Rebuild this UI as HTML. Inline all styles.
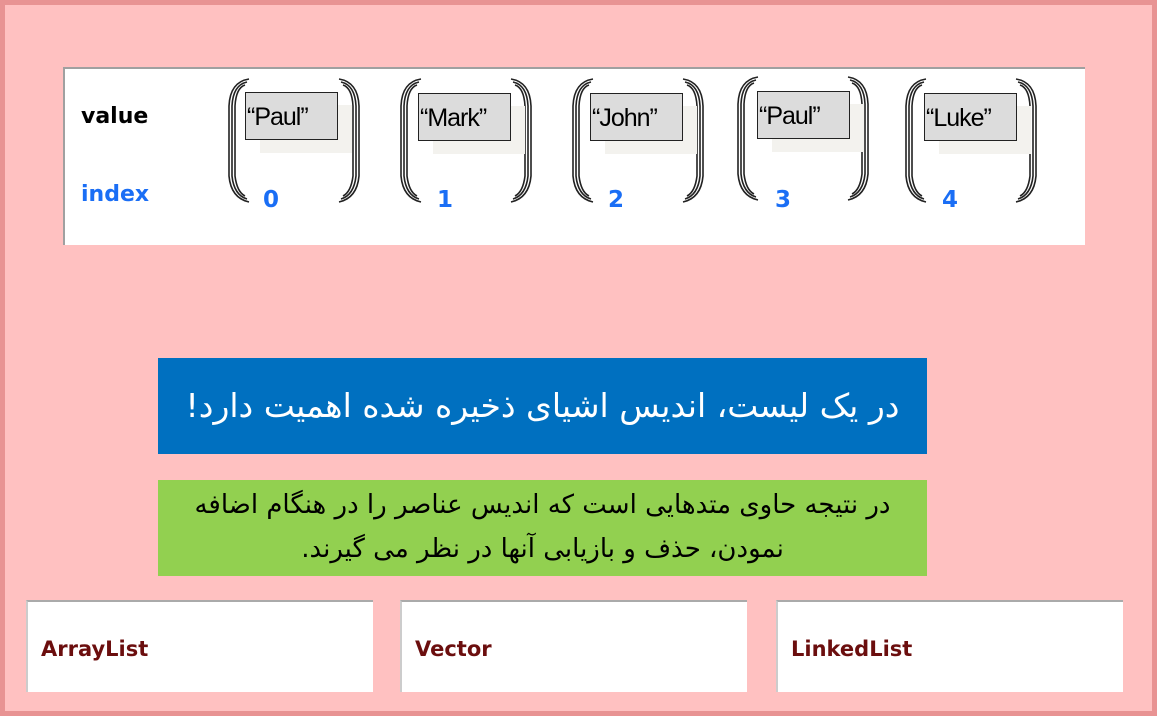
<!DOCTYPE html><html><head><meta charset="utf-8"><style>
body{margin:0;width:1157px;height:716px;overflow:hidden;font-family:"Liberation Sans",sans-serif}
.frame{position:absolute;left:0;top:0;width:1147px;height:706px;border:5px solid #e89393;background:#ffc1c1}
.a{position:absolute}
.top{left:63px;top:67px;width:1020px;height:176px;background:#fff;border-top:2px solid #a0a0a0;border-left:2px solid #a0a0a0}
.lbl{font-family:"DejaVu Sans",sans-serif;font-weight:bold;font-size:22px}
.box{background:#dcdcdc;border:1.5px solid #222;width:93px;height:48px;font-size:25px;line-height:48px;padding-left:1px;box-sizing:border-box;letter-spacing:-1px}
.sh{background:#f3f2ee;width:92px;height:48px}
.idx{color:#1a6ef5;font-family:"DejaVu Sans",sans-serif;font-weight:bold;font-size:23px}
.blue{left:158px;top:358px;width:769px;height:96px;background:#0070c0;color:#fff;font-family:"DejaVu Sans",sans-serif;font-size:33px;text-align:center;line-height:96px}
.green{left:158px;top:480px;width:769px;height:96px;background:#92d050;color:#000;font-family:"DejaVu Sans",sans-serif;font-size:26px;text-align:center;line-height:44px;padding-top:3px;box-sizing:border-box;white-space:nowrap}
.bt{top:600px;width:347px;height:92px;background:#fff;border-top:2px solid #aaa;border-left:2px solid #ccc;color:#6b0e0e;font-family:"DejaVu Sans",sans-serif;font-weight:bold;font-size:21px;line-height:94px;padding-left:13px;box-sizing:border-box}
</style></head><body>
<div class="frame"></div>
<div class="a top"></div>
<div class="a lbl" style="left:81px;top:104px">value</div>
<div class="a lbl idx" style="left:81px;top:182px;font-size:22px">index</div>
<svg class="a" style="left:0;top:0" width="1157" height="716">
<defs><g id="br" fill="none" stroke="#222" stroke-width="1.6">
<path d="M22 3 Q3 6 2 30 L2 100 Q4 122 22 126"/><path d="M20 6 Q6 9 5 30 L5 100 Q7 119 20 123"/><path d="M18 9 Q9 12 8 30 L8 100 Q10 116 18 120"/>
<path d="M112 3 Q131 6 132 30 L132 100 Q130 122 112 126"/><path d="M114 6 Q128 9 129 30 L129 100 Q127 119 114 123"/><path d="M116 9 Q125 12 126 30 L126 100 Q124 116 116 120"/>
</g></defs>
<use href="#br" x="227" y="76"/><use href="#br" x="399" y="76"/><use href="#br" x="571" y="76"/><use href="#br" x="736" y="74"/><use href="#br" x="904" y="76"/>
</svg>
<div class="a sh" style="left:260px;top:105px"></div><div class="a box" style="left:245px;top:92px">“Paul”</div>
<div class="a sh" style="left:433px;top:106px"></div><div class="a box" style="left:418px;top:93px">“Mark”</div>
<div class="a sh" style="left:605px;top:106px"></div><div class="a box" style="left:590px;top:93px">“John”</div>
<div class="a sh" style="left:772px;top:104px"></div><div class="a box" style="left:757px;top:91px">“Paul”</div>
<div class="a sh" style="left:939px;top:106px"></div><div class="a box" style="left:924px;top:93px">“Luke”</div>
<div class="a idx" style="left:263px;top:187px">0</div>
<div class="a idx" style="left:437px;top:187px">1</div>
<div class="a idx" style="left:608px;top:187px">2</div>
<div class="a idx" style="left:775px;top:187px">3</div>
<div class="a idx" style="left:942px;top:187px">4</div>
<div class="a blue" dir="rtl">در یک لیست، اندیس اشیای ذخیره شده اهمیت دارد!</div>
<div class="a green" dir="rtl">در نتیجه حاوی متدهایی است که اندیس عناصر را در هنگام اضافه<br>نمودن، حذف و بازیابی آنها در نظر می گیرند.</div>
<div class="a bt" style="left:26px">ArrayList</div>
<div class="a bt" style="left:400px">Vector</div>
<div class="a bt" style="left:776px">LinkedList</div>
</body></html>
